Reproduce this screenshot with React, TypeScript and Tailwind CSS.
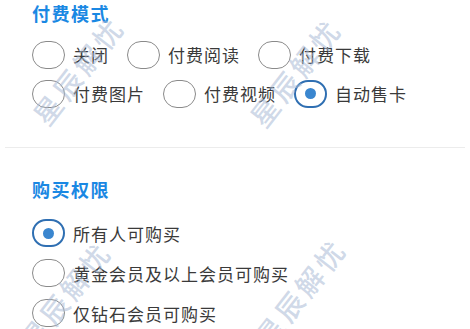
import React from "react";

const font = { fontFamily: '"Noto Sans CJK SC", "Noto Sans", sans-serif' };

function Radio({ label, checked }: { label: string; checked?: boolean }) {
  return (
    <div className="flex items-center gap-[8px]">
      {checked ? (
        <div className="flex h-[28px] w-[33px] items-center justify-center rounded-full border-2 border-[#2f6fb2]">
          <div className="h-[11px] w-[11px] rounded-full bg-[#3a86cf]" />
        </div>
      ) : (
        <div className="h-[28px] w-[33px] rounded-full border-[1.5px] border-[#8a8a8a]" />
      )}
      <span className="text-[17px] leading-none tracking-[1px] text-[#3a3a3a]">{label}</span>
    </div>
  );
}

function Watermark({ className }: { className: string }) {
  return (
    <div
      className={`pointer-events-none absolute w-[128px] -rotate-[52deg] whitespace-nowrap text-center text-[28px] font-medium leading-[40px] tracking-[4px] text-[#a7b9d4]/55 ${className}`}
    >
      星辰解忧
    </div>
  );
}

export default function App() {
  return (
    <div className="relative h-[329px] w-[470px] overflow-hidden bg-white" style={font}>
      {/* ── 付费模式 ─────────────── */}
      <div className="pl-[32px]">
        <h2 className="text-[18px] font-bold leading-[26px] tracking-[1.5px] text-[#1a88e3]">付费模式</h2>
        <div className="mt-[9px] flex h-[39px] items-center gap-[18px]">
          <Radio label="关闭" />
          <Radio label="付费阅读" />
          <Radio label="付费下载" />
        </div>
        <div className="flex h-[39px] items-center gap-[18px]">
          <Radio label="付费图片" />
          <Radio label="付费视频" />
          <Radio label="自动售卡" checked />
        </div>
      </div>

      <div className="mx-[5px] mt-[34px] h-px bg-[#ececec]" />

      {/* ── 购买权限 ─────────────── */}
      <div className="pl-[32px]">
        <h2 className="mt-[28px] text-[18px] font-bold leading-[26px] tracking-[1.5px] text-[#1a88e3]">购买权限</h2>
        <div className="mt-[11px] flex flex-col">
          <div className="flex h-[40px] items-center">
            <Radio label="所有人可购买" checked />
          </div>
          <div className="flex h-[40px] items-center">
            <Radio label="黄金会员及以上会员可购买" />
          </div>
          <div className="flex h-[40px] items-center">
            <Radio label="仅钻石会员可购买" />
          </div>
        </div>
      </div>

      <Watermark className="left-[14px] top-[50px]" />
      <Watermark className="left-[231px] top-[52px]" />
      <Watermark className="left-[1px] top-[275px]" />
      <Watermark className="left-[236px] top-[272px]" />
    </div>
  );
}
